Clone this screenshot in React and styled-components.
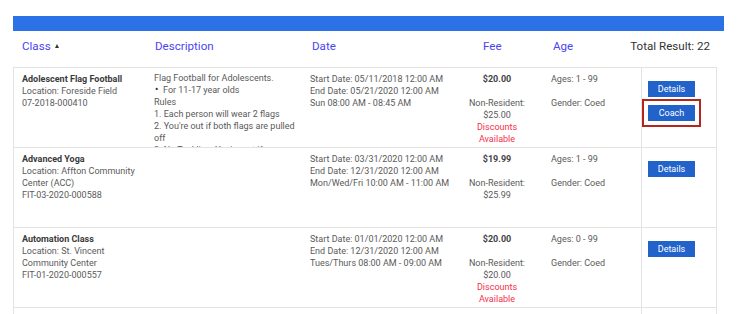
import React from "react";
import styled, { createGlobalStyle } from "styled-components";

const GlobalStyle = createGlobalStyle`
  html, body { margin: 0; padding: 0; background: #fff; }
  body { font-family: Roboto, "Liberation Sans", Arial, sans-serif; }
  * { box-sizing: border-box; }
`;

const Page = styled.div`
  padding: 16px 0 0 13px;
  width: 741px;
  height: 314px;
  overflow: hidden;
`;

const Bar = styled.div`
  width: 711px;
  height: 15px;
  background: #2a72e5;
`;

const HeaderRow = styled.div`
  display: grid;
  grid-template-columns: 141px 156px 150px 74px 80px 1fr;
  width: 704px;
  height: 36px;
  padding-top: 8px;
`;

const HeaderCell = styled.div`
  padding-left: ${(p) => p.$indent || 0}px;
  font-size: 11.6px;
  line-height: 15px;
  color: ${(p) => (p.$plain ? "#333" : "#4b44f0")};
  text-align: ${(p) => (p.$right ? "right" : "left")};
  padding-right: ${(p) => (p.$right ? 7 : 0)}px;
  white-space: nowrap;
`;

const SortArrow = styled.span`
  display: inline-block;
  margin-left: 4px;
  vertical-align: middle;
  border-left: 2.5px solid transparent;
  border-right: 2.5px solid transparent;
  border-bottom: 4px solid #333;
  position: relative;
  top: -1px;
`;

const Table = styled.div`
  width: 704px;
  border-top: 1px solid #e3e3e3;
  border-left: 1px solid #e3e3e3;
  border-right: 1px solid #e3e3e3;
`;

const Row = styled.div`
  display: grid;
  grid-template-columns: 140px 156px 150px 74px 107px 75px;
  height: 80px;
  border-bottom: 1px solid #e3e3e3;
  overflow: hidden;
`;

const Cell = styled.div`
  padding-top: 5px;
  font-size: 9px;
  line-height: 12px;
  color: #5a5a5a;
  overflow: hidden;
`;

const ClassCell = styled(Cell)`
  padding-left: 8px;
  padding-right: 8px;
`;

const ClassName = styled.div`
  font-weight: 700;
  color: #3a3a3a;
`;

const DescCell = styled(Cell)`
  padding-right: 10px;
  padding-top: 4px;
`;

const Bullets = styled.ul`
  margin: 0;
  padding: 0;
  list-style: none;
`;

const Bullet = styled.li`
  &::before {
    content: "•";
    display: inline-block;
    width: 8px;
    padding-left: 1px;
    font-size: 10px;
    color: #333;
  }
`;

const FeeCell = styled(Cell)`
  text-align: center;
`;

const Price = styled.div`
  font-weight: 700;
  color: #444;
`;

const Block = styled.div`
  margin-top: ${(p) => p.$gap || 0}px;
`;

const Discount = styled.div`
  color: #f4304a;
`;

const AgeCell = styled(Cell)`
  padding-left: 17px;
`;

const ActionCell = styled.div`
  border-left: 1px solid #e3e3e3;
  padding: 13px 0 0 6px;
  display: flex;
  flex-direction: column;
  align-items: flex-start;
  gap: 8px;
`;

const Button = styled.button`
  width: 47px;
  height: 16px;
  padding: 0;
  border: none;
  border-radius: 0;
  background: #2262cb;
  color: #fff;
  font-family: Roboto, "Liberation Sans", Arial, sans-serif;
  font-size: 9px;
  line-height: 16px;
  cursor: pointer;
  outline: ${(p) => (p.$highlight ? "2px solid #b3261e" : "none")};
  outline-offset: 4px;
`;

const rows = [
  {
    name: "Adolescent Flag Football",
    info: ["Location: Foreside Field", "07-2018-000410"],
    desc: true,
    dates: [
      "Start Date: 05/11/2018 12:00 AM",
      "End Date: 05/21/2020 12:00 AM",
      "Sun 08:00 AM - 08:45 AM",
    ],
    price: "$20.00",
    nonRes: "$25.00",
    discount: true,
    ages: "Ages: 1 - 99",
    coach: true,
  },
  {
    name: "Advanced Yoga",
    info: ["Location: Affton Community Center (ACC)", "FIT-03-2020-000588"],
    dates: [
      "Start Date: 03/31/2020 12:00 AM",
      "End Date: 12/31/2020 12:00 AM",
      "Mon/Wed/Fri 10:00 AM - 11:00 AM",
    ],
    price: "$19.99",
    nonRes: "$25.99",
    ages: "Ages: 1 - 99",
  },
  {
    name: "Automation Class",
    info: ["Location: St. Vincent Community Center", "FIT-01-2020-000557"],
    dates: [
      "Start Date: 01/01/2020 12:00 AM",
      "End Date: 12/31/2020 12:00 AM",
      "Tues/Thurs 08:00 AM - 09:00 AM",
    ],
    price: "$20.00",
    nonRes: "$20.00",
    discount: true,
    ages: "Ages: 0 - 99",
  },
  {
    name: "Basketball League",
    info: ["Location: Main Gym", "REC-02-2020-000601"],
    dates: ["Start Date: 02/01/2020 12:00 AM"],
    price: "$15.00",
    nonRes: "$18.00",
    ages: "Ages: 8 - 14",
  },
];

function Description() {
  return (
    <>
      <div>Flag Football for Adolescents.</div>
      <Bullets>
        <Bullet>For 11-17 year olds</Bullet>
      </Bullets>
      <div>Rules</div>
      <div>1. Each person will wear 2 flags</div>
      <div>2. You're out if both flags are pulled off</div>
      <div>3. No Tackling. You're out if you tackle another player</div>
    </>
  );
}

export default function App() {
  return (
    <>
      <GlobalStyle />
      <Page>
        <Bar />
        <HeaderRow>
          <HeaderCell $indent={9}>
            Class
            <SortArrow />
          </HeaderCell>
          <HeaderCell $indent={1}>Description</HeaderCell>
          <HeaderCell $indent={2}>Date</HeaderCell>
          <HeaderCell $indent={23}>Fee</HeaderCell>
          <HeaderCell $indent={19}>Age</HeaderCell>
          <HeaderCell $plain $right>
            Total Result: 22
          </HeaderCell>
        </HeaderRow>
        <Table>
          {rows.map((r) => (
            <Row key={r.name}>
              <ClassCell>
                <ClassName>{r.name}</ClassName>
                {r.info.map((t) => (
                  <div key={t}>{t}</div>
                ))}
              </ClassCell>
              <DescCell>{r.desc ? <Description /> : null}</DescCell>
              <Cell>
                {r.dates.map((d) => (
                  <div key={d}>{d}</div>
                ))}
              </Cell>
              <FeeCell>
                <Price>{r.price}</Price>
                <Block $gap={12}>Non-Resident: {r.nonRes}</Block>
                {r.discount ? <Discount>Discounts Available</Discount> : null}
              </FeeCell>
              <AgeCell>
                <div>{r.ages}</div>
                <Block $gap={12}>Gender: Coed</Block>
              </AgeCell>
              <ActionCell>
                <Button>Details</Button>
                {r.coach ? <Button $highlight>Coach</Button> : null}
              </ActionCell>
            </Row>
          ))}
        </Table>
      </Page>
    </>
  );
}
